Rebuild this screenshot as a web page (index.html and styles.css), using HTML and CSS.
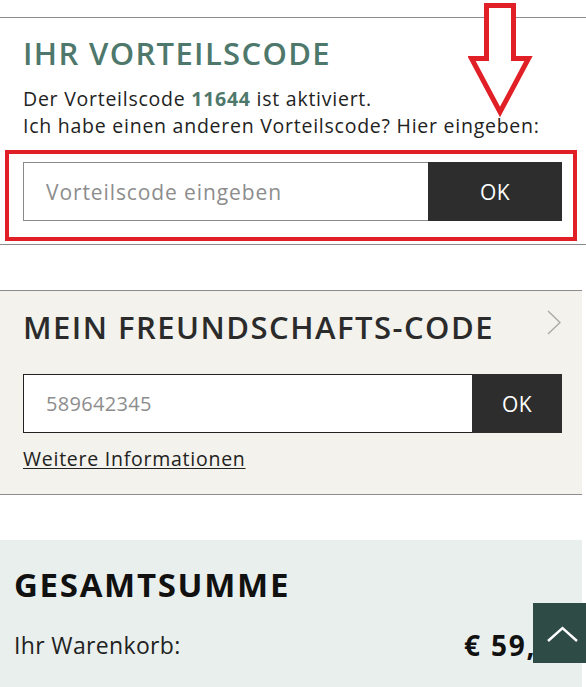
FILE: index.html
```html
<!DOCTYPE html>
<html lang="de">
<head>
<meta charset="utf-8">
<title>Warenkorb</title>
<link rel="stylesheet" href="styles.css">
</head>
<body>
<div class="page">
  <section class="voucher">
    <h2 class="title title-green">IHR VORTEILSCODE</h2>
    <p class="text">Der Vorteilscode <strong class="code">11644</strong> ist aktiviert.<br>Ich habe einen anderen Vorteilscode? Hier eingeben:</p>
    <div class="highlight">
      <form class="code-form">
        <input class="code-input code-input-light" type="text" placeholder="Vorteilscode eingeben">
        <button class="ok-btn ok-btn-wide" type="button">OK</button>
      </form>
    </div>
  </section>

  <section class="friend">
    <div class="friend-head">
      <h2 class="title title-dark">MEIN FREUNDSCHAFTS-CODE</h2>
      <svg class="chevron" width="16" height="26" viewBox="0 0 16 26"><polyline points="2,1 14,12.5 2,24" fill="none" stroke="#a9a9a6" stroke-width="1.4"/></svg>
    </div>
    <form class="code-form">
      <input class="code-input code-input-dark" type="text" placeholder="589642345">
      <button class="ok-btn ok-btn-narrow" type="button">OK</button>
    </form>
    <a class="more" href="#">Weitere Informationen</a>
  </section>

  <section class="total">
    <h2 class="title title-black">GESAMTSUMME</h2>
    <div class="total-row">
      <span class="total-label">Ihr Warenkorb:</span>
      <span class="price">€ 59,90</span>
    </div>
  </section>

  <svg class="annot-arrow" width="70" height="120" viewBox="0 0 70 120">
    <polygon points="18.5,5.5 45.5,5.5 45.5,58.5 60.5,58.5 32,112 3.5,58.5 18.5,58.5" fill="#fff" stroke="#e11f26" stroke-width="5" stroke-linejoin="miter"/>
  </svg>

  <button class="to-top" type="button" aria-label="Nach oben">
    <svg width="40" height="22" viewBox="0 0 40 22"><polyline points="9,19 23.5,6 38,19" fill="none" stroke="#fff" stroke-width="2.4"/></svg>
  </button>
</div>
</body>
</html>
```

FILE: styles.css
```css
* { box-sizing: border-box; }

html, body {
  margin: 0;
  padding: 0;
  background: #fff;
}

body {
  font-family: "Open Sans", "Liberation Sans", sans-serif;
  color: #222;
  overflow: hidden;
}

.page {
  position: relative;
  width: 586px;
  min-height: 687px;
  padding-top: 17px;
}

.title {
  margin: 0;
  font-size: 31px;
  line-height: 38px;
  font-weight: 600;
}

.title-green { color: #4e786b; letter-spacing: 1.35px; }
.title-dark { color: #2b2b2b; letter-spacing: 1.48px; }
.title-black { color: #111; font-weight: 700; font-size: 33px; letter-spacing: 1.7px; }

/* voucher */
.voucher {
  border-top: 1px solid #8c8c8c;
  border-bottom: 1px solid #8c8c8c;
  padding: 16px 24px 3px 23px;
}

.text {
  margin: 13px 0 0;
  font-size: 19.5px;
  line-height: 27px;
  letter-spacing: 0.75px;
}

.code {
  color: #4e786b;
  font-weight: 700;
}

.highlight {
  margin: 11px -15px 0 -18px;
  border: 4px solid #e11f26;
  padding: 8px 11px 16px 14px;
}

.code-form {
  display: flex;
  height: 59px;
}

.code-input {
  flex: 1;
  min-width: 0;
  height: 59px;
  margin: 0;
  padding: 0 22px;
  background: #fff;
  font-family: "Open Sans", "Liberation Sans", sans-serif;
  color: #222;
  outline: none;
  border-radius: 0;
}

.code-input::placeholder { color: #8d8d8d; }

.code-input-light {
  border: 1px solid #8a8a8a;
  border-right: none;
  font-size: 21px;
  letter-spacing: 0.9px;
}

.code-input-dark {
  border: 1px solid #222;
  border-right: none;
  font-size: 20px;
  letter-spacing: 0.3px;
}

.ok-btn {
  height: 59px;
  border: none;
  margin: 0;
  background: #2d2d2d;
  color: #fff;
  font-family: "Open Sans", "Liberation Sans", sans-serif;
  font-size: 21px;
  letter-spacing: 0.5px;
  border-radius: 0;
}

.ok-btn-wide { width: 134px; }
.ok-btn-narrow { width: 90px; }

/* friendship */
.friend {
  margin: 45px 4px 0 0;
  background: #f3f2ec;
  border-top: 1px solid #8c8c8c;
  border-bottom: 1px solid #8c8c8c;
  padding: 17px 20px 22px 23px;
}

.friend-head {
  display: flex;
  justify-content: space-between;
  align-items: flex-start;
  margin-bottom: 28px;
}

.chevron {
  margin-top: 2px;
}

.more {
  display: block;
  margin-top: 12px;
  font-size: 19.5px;
  line-height: 27px;
  color: #222;
  text-decoration: underline;
  text-underline-offset: 2px;
  letter-spacing: 0.75px;
  width: max-content;
}

/* total */
.total {
  margin: 45px 4px 0 0;
  min-height: 160px;
  background: #e9efed;
  padding: 26px 0 0 14px;
}

.total-row {
  display: flex;
  align-items: center;
  justify-content: space-between;
  margin-top: 24px;
  height: 34px;
}

.total-label {
  font-size: 23px;
  line-height: 30px;
  letter-spacing: 0.35px;
  color: #222;
}

.price {
  font-size: 28px;
  line-height: 34px;
  font-weight: 700;
  color: #111;
  white-space: nowrap;
  letter-spacing: 1.8px;
  width: 118px;
}

/* annotation arrow (overlay) */
.annot-arrow {
  position: absolute;
  left: 468px;
  top: 0;
}

/* scroll to top (fixed overlay) */
.to-top {
  position: fixed;
  right: 0;
  top: 603px;
  width: 53px;
  height: 60px;
  border: none;
  padding: 0;
  background: #2f4b46;
  display: flex;
  align-items: center;
  justify-content: flex-start;
}

.to-top svg { margin-left: 6px; margin-top: -1px; }
```
